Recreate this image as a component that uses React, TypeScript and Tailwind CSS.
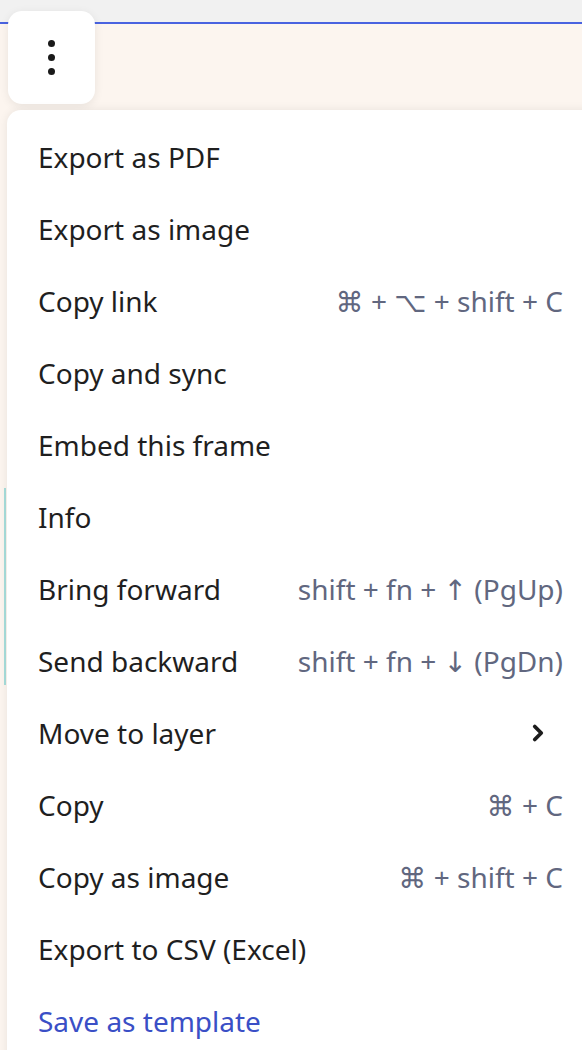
import { ChevronRight } from 'lucide-react';

type Item = { label: string; shortcut?: string; submenu?: boolean; accent?: boolean };

const ITEMS: Item[] = [
  { label: 'Export as PDF' },
  { label: 'Export as image' },
  { label: 'Copy link', shortcut: '⌘ + ⌥ + shift + C' },
  { label: 'Copy and sync' },
  { label: 'Embed this frame' },
  { label: 'Info' },
  { label: 'Bring forward', shortcut: 'shift + fn + ↑ (PgUp)' },
  { label: 'Send backward', shortcut: 'shift + fn + ↓ (PgDn)' },
  { label: 'Move to layer', submenu: true },
  { label: 'Copy', shortcut: '⌘ + C' },
  { label: 'Copy as image', shortcut: '⌘ + shift + C' },
  { label: 'Export to CSV (Excel)' },
  { label: 'Save as template', accent: true },
];

function MoreButton() {
  return (
    <button className="absolute top-[11px] left-[8px] w-[87px] h-[93px] bg-white rounded-[14px] shadow-[0_2px_10px_rgba(0,0,0,0.08)] flex flex-col items-center justify-center gap-[7px]">
      <span className="size-[7px] rounded-full bg-[#1a1a1a]" />
      <span className="size-[7px] rounded-full bg-[#1a1a1a]" />
      <span className="size-[7px] rounded-full bg-[#1a1a1a]" />
    </button>
  );
}

function ContextMenu() {
  return (
    <div className="absolute top-[110px] left-[7px] right-[-30px] h-[1000px] bg-white rounded-[14px] shadow-[0_0_10px_rgba(0,0,0,0.08)] pt-[11px] pr-[49px]">
      {ITEMS.map((item) => (
        <div key={item.label} className="h-[72px] flex items-center justify-between pl-[31px]">
          <span className={`text-[28px] ${item.accent ? 'text-[#3a4fc6]' : 'text-[#1f1f1f]'}`}>
            {item.label}
          </span>
          {item.shortcut && (
            <span className="text-[28px] text-[#61677f]">{item.shortcut}</span>
          )}
          {item.submenu && (
            <ChevronRight className="size-[26px] mr-[12px] text-[#1c1c1c]" strokeWidth={3.5} />
          )}
        </div>
      ))}
    </div>
  );
}

export default function App() {
  return (
    <div className="relative w-full h-[1050px] overflow-hidden bg-[#fcf5ef] flex flex-col" style={{ fontFamily: '"Noto Sans", "DejaVu Sans", sans-serif' }}>
      <div className="h-[22px] bg-[#f1f1f1]" />
      <div className="h-[2px] bg-[#4a63e0]" />
      <div className="flex-1 pt-[464px]">
        <div className="ml-[4px] w-[2px] h-[197px] bg-[#a7dedb]" />
      </div>
      <MoreButton />
      <ContextMenu />
    </div>
  );
}
